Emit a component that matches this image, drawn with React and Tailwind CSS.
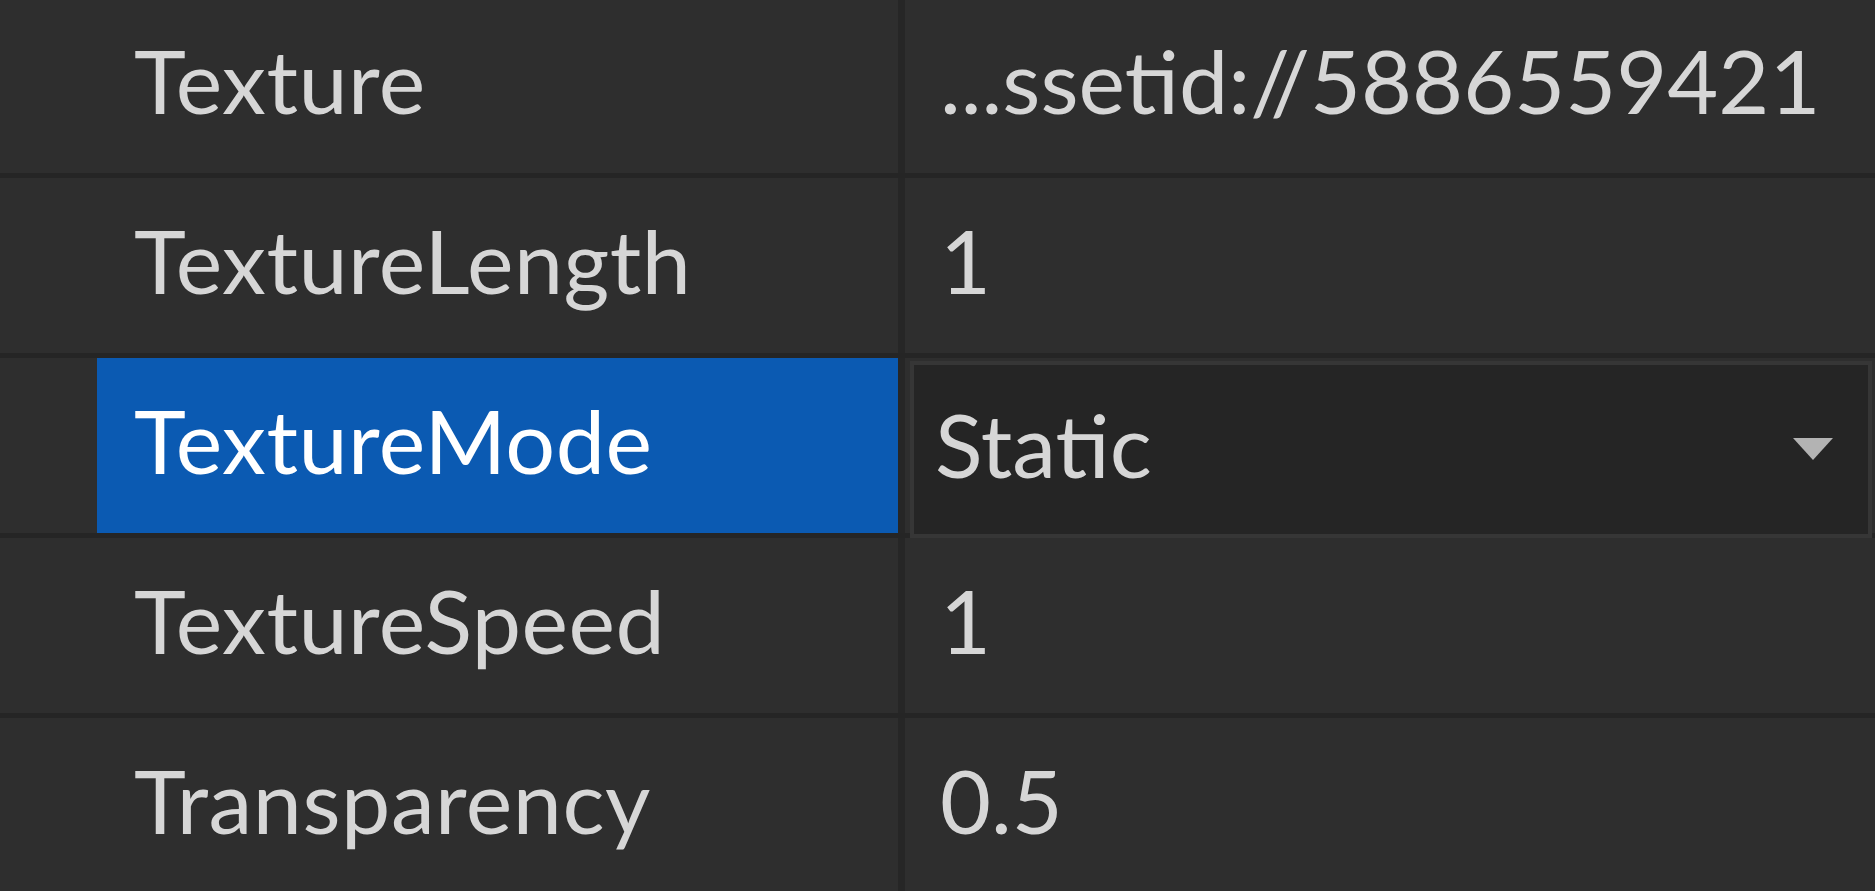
import React from "react";

const rows = [
  { label: "Texture", value: "...ssetid://5886559421" },
  { label: "TextureLength", value: "1" },
  { label: "TextureMode", value: "Static", selected: true },
  { label: "TextureSpeed", value: "1" },
  { label: "Transparency", value: "0.5" },
];

function Row({ label, value, selected }) {
  return (
    <div className="flex h-[175px] shrink-0">
      <div className="flex w-[898px] shrink-0 pl-[97px]">
        <div
          className={
            selected
              ? "flex flex-1 items-center bg-[#0b5ab2] pl-[37px] text-white"
              : "flex flex-1 items-center pl-[37px] text-[#d6d6d6]"
          }
        >
          <span className="pb-[12px] tracking-[0.5px]">{label}</span>
        </div>
      </div>
      <div className="w-[7px] shrink-0 bg-[#262626]" />
      {selected ? (
        <div className="relative z-10 -mb-[5px] ml-[5px] mr-[3px] mt-[3px] flex flex-1 items-center justify-between border-[4px] border-[#363636] bg-[#252525] pl-[21px] pr-[34px] text-[#d6d6d6]">
          <span className="pb-[12px]">{value}</span>
          <svg width="42" height="26" viewBox="0 0 42 26" className="mb-[2px]">
            <polygon points="1,2 41,2 21,24" fill="#b3b3b3" />
          </svg>
        </div>
      ) : (
        <div className="flex flex-1 items-center pl-[35px] text-[#d6d6d6]">
          <span className="pb-[12px]">{value}</span>
        </div>
      )}
    </div>
  );
}

export default function App() {
  return (
    <div
      className="h-[891px] w-[1875px] overflow-hidden bg-[#2e2e2e] text-[88px] leading-none"
      style={{ fontFamily: "Lato, 'Noto Sans', sans-serif" }}
    >
      <div className="-mt-[2px] flex flex-col">
        {rows.map((r, i) => (
          <React.Fragment key={r.label}>
            {i > 0 && <div className="h-[5px] shrink-0 bg-[#252525]" />}
            <Row {...r} />
          </React.Fragment>
        ))}
      </div>
    </div>
  );
}
